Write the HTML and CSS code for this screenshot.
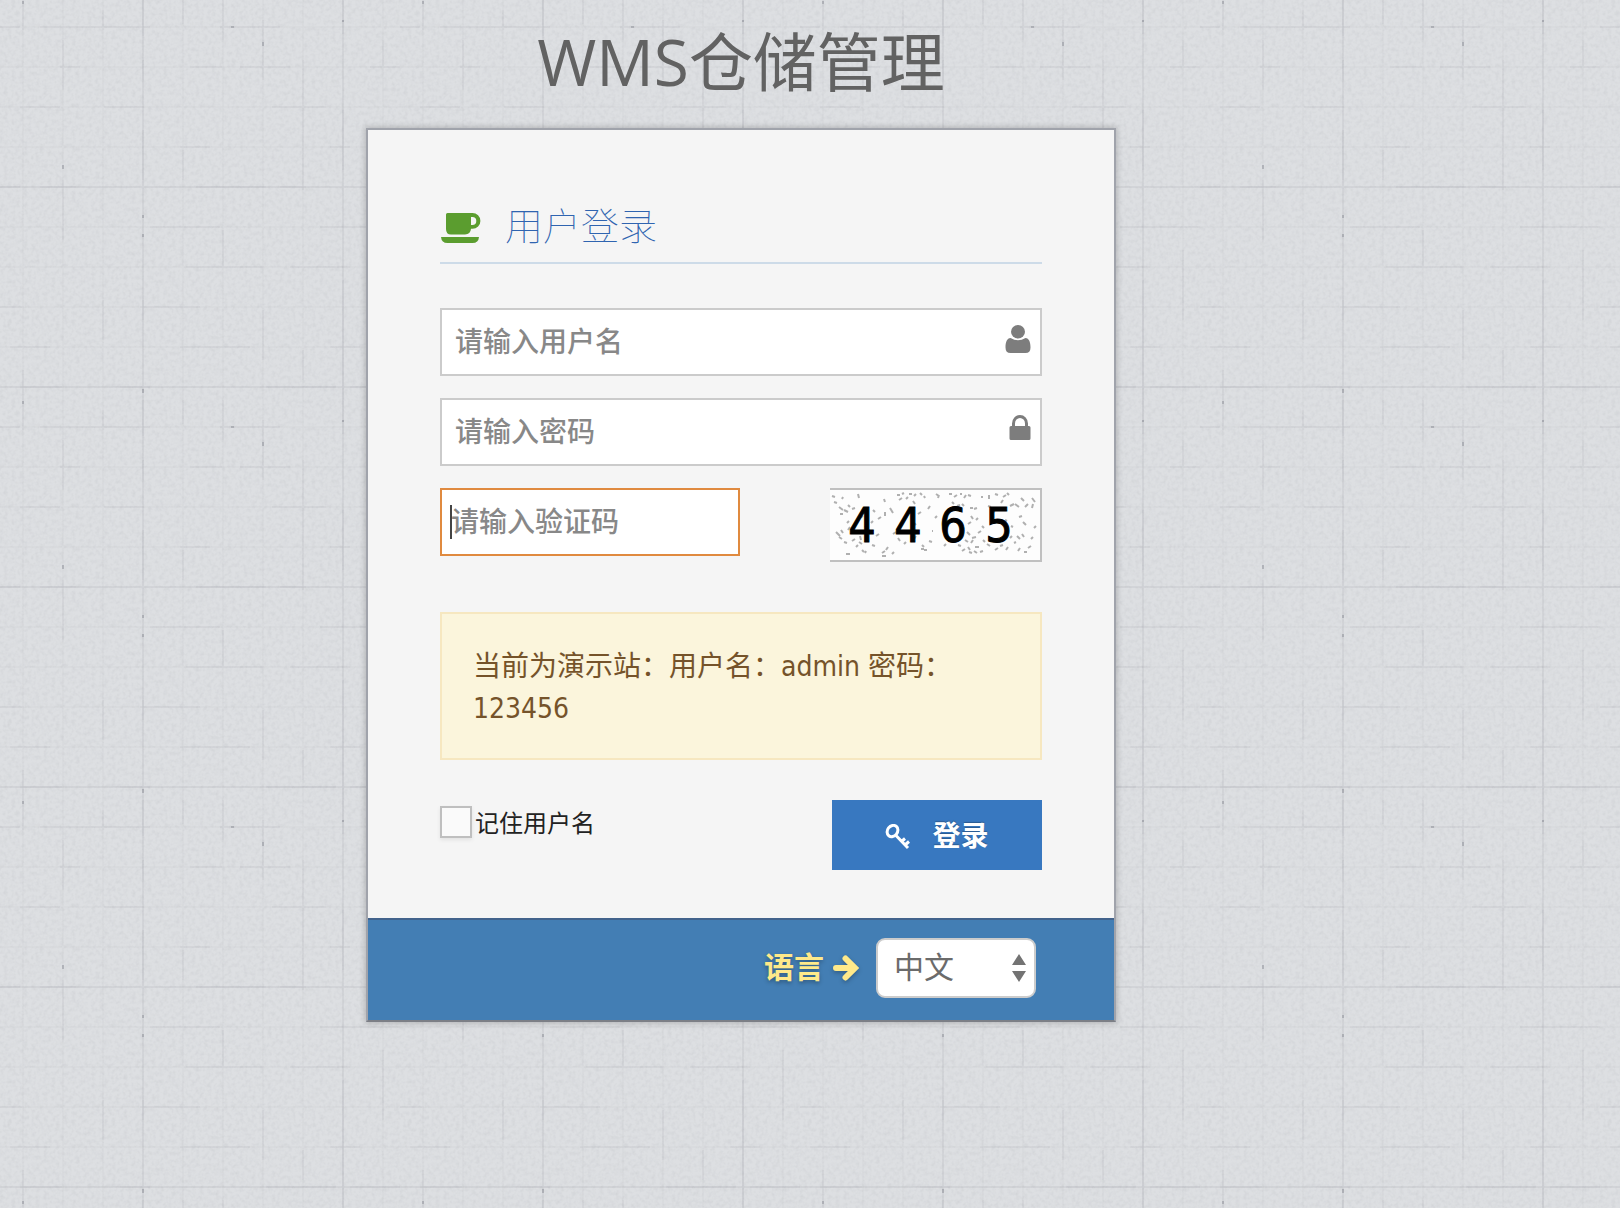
FILE: index.html
```html
<!DOCTYPE html>
<html lang="zh-CN">
<head>
  <meta charset="utf-8">
  <meta name="viewport" content="width=device-width, initial-scale=1">
  <title>WMS仓储管理</title>
  <link rel="stylesheet" href="styles.css">
</head>
<body>
  <main class="page">
    <h1 class="page-title">WMS仓储管理</h1>

    <form class="card">
      <div class="card-body">
        <h2 class="card-heading">
          <svg class="icon-cup" viewBox="0 0 40 30" aria-hidden="true">
            <path fill-rule="evenodd" d="M5 1.500Q5 0 6.500 0H31.500a7.500 7.500 0 0 1 0 15.800H30Q29.500 21.500 24 21.500H10Q5 21.500 5 16ZM30 4V12H31.300a4 4 0 0 0 0-8Z"/>
            <path d="M0 24H38Q37.500 30 31.500 30H6.500Q.500 30 0 24Z"/>
          </svg>
          <span>用户登录</span>
        </h2>

        <div class="fields">
          <div class="field">
            <input class="input" type="text" placeholder="请输入用户名" aria-label="用户名">
            <svg class="field-icon" viewBox="0 0 26 28" aria-hidden="true">
              <ellipse cx="13" cy="6.800" rx="7" ry="6.800"/>
              <path d="M5.500 13C2 13.300 .500 17 .500 22.500Q.500 28 5.500 28H20.500Q25.500 28 25.500 22.500C25.500 17 24 13.300 20.500 13Q13 17.500 5.500 13Z"/>
            </svg>
          </div>
          <div class="field">
            <input class="input" type="password" placeholder="请输入密码" aria-label="密码">
            <svg class="field-icon field-icon-lock" viewBox="0 0 22 26" aria-hidden="true">
              <path fill-rule="evenodd" d="M3 11V8.500a8 8.500 0 0 1 16 0V11H20Q21.500 11 21.500 12.500V23.500Q21.500 25 20 25H2Q.500 25 .500 23.500V12.500Q.500 11 2 11ZM6 11H16V8.500a5 5.500 0 0 0-10 0Z"/>
            </svg>
          </div>
          <div class="captcha-row">
            <div class="field field-code">
              <input class="input input-code" type="text" placeholder="请输入验证码" aria-label="验证码">
              <span class="caret" aria-hidden="true"></span>
            </div>
            <svg class="captcha" viewBox="0 0 210 70" role="img" aria-label="4465">
              <path class="speck" d="M2 6l3 1M4 12l3 1M9 17l4 3M14 20l4 2M22 19l3-1M12 9l1-2M28 4l1 4M10 24l3 0M18 15l2 2M30 28l3-2M17 33l2-2M6 42l4 4M9 47l3 2M13 43l-2-3M18 40l2-3M22 51l3-2M14 52l3 1M26 57l2-2M16 64l4 0M32 60l2 2M30 46l1 4M35 36l3 3M41 33l2-2M42 55l3 1M46 46l3-2M52 63l3-2M56 60l2-3M52 66l4 0M62 64l2-2M54 9l1 3M60 18l3 5M55 26l0-4M67 5l3 0M72 4l2-1M69 10l3-2M79 4l3 0M76 9l2-2M84 6l2-2M90 3l2 2M94 6l1 2M85 14l-2-3M88 24l3-2M63 44l3-2M68 48l2 3M74 54l2-2M84 49l2-3M91 59l3 0M94 60l3 0M92 55l2 2M102 41l1 0M106 4l3 2M108 8l1-3M119 4l3 0M124 7l3-2M130 4l2 0M134 8l2-3M138 5l3 1M122 12l2 2M127 16l3-1M132 14l2 2M140 18l3 0M144 19l3-1M141 26l2 3M138 34l3-2M146 30l2-2M151 7l2 0M159 5l0 4M165 4l3 1M173 7l3-2M177 3l2 2M171 13l2-3M180 16l4-2M185 14l4 3M191 8l3 3M195 17l3-3M202 8l3 4M202 18l1-4M189 27l3-1M193 32l3 3M181 36l2 1M175 30l2 1M204 38l2-2M187 46l3 3M192 44l2 3M180 48l2-2M184 53l2-1M188 61l2-3M194 62l3 0M198 58l3-2M201 49l2-2M132 61l3-2M138 57l2 3M141 53l2-3M145 57l4 0M142 48l4-1M148 43l3-2M137 42l3 3M135 50l3 2M153 50l2 2M157 54l3 2M150 62l3-1M128 55l3 1M121 50l3 2M114 56l2-2M116 22l3 0M105 28l2-2M98 19l2-3M84 33l2 2M48 29l3-2M43 20l2 2M165 60l3-2M170 56l3-1M176 60l2-3M158 16l3 1M163 22l2-1M152 36l2 2M139 62l3 1M144 61l3 2M35 63l1-2M29 52l3 2M99 51l3 1"/>
              <g class="captcha-digits">
                <text x="32" y="52">4</text>
                <text x="78" y="52">4</text>
                <text x="123" y="52">6</text>
                <text x="169" y="52">5</text>
              </g>
            </svg>
          </div>
        </div>

        <p class="notice">当前为演示站：用户名：admin 密码： 123456</p>

        <div class="actions">
          <label class="remember">
            <input class="remember-box" type="checkbox">
            <span>记住用户名</span>
          </label>
          <button class="submit" type="button">
            <svg class="icon-key" viewBox="0 0 26 26" aria-hidden="true">
              <ellipse cx="7.500" cy="7" rx="5" ry="6" transform="rotate(38 7.500 7)"/>
              <path d="M11 11.500L23 24M16.500 17.500L20 14.500M20 21L24 17.500"/>
            </svg>
            <span>登录</span>
          </button>
        </div>
      </div>

      <div class="card-footer">
        <label class="language" for="language">
          <span>语言</span>
          <svg class="icon-arrow" viewBox="0 0 26 26" aria-hidden="true">
            <path d="M3 13H20M12.500 3.500L22 13L12.500 22.500"/>
          </svg>
        </label>
        <div class="select-wrap">
          <select class="select" id="language">
            <option>中文</option>
            <option>English</option>
          </select>
          <svg class="select-arrows" viewBox="0 0 14 28" aria-hidden="true">
            <path d="M7 0L14 11H0ZM0 17H14L7 28Z"/>
          </svg>
        </div>
      </div>
    </form>
  </main>
</body>
</html>
```
FILE: styles.css
```css
* {
  box-sizing: border-box;
}

body {
  margin: 0;
  min-height: 100vh;
  color: #393939;
  font-family: "DejaVu Sans Condensed", "Noto Sans CJK SC", sans-serif;
  font-size: 28px;
  line-height: 42px;
  background-color: #dddfe2;
  /* graph-paper tile: fine grain, 40px grid, a darker rule every 200px */
  background-image: url("data:image/svg+xml,%3Csvg xmlns='http://www.w3.org/2000/svg' width='400' height='400'%3E%3Cfilter id='n' x='0' y='0' width='100%25' height='100%25'%3E%3CfeTurbulence type='fractalNoise' baseFrequency='.25' numOctaves='3' seed='4' stitchTiles='stitch'/%3E%3CfeColorMatrix values='0 0 0 0 .45 0 0 0 0 .46 0 0 0 0 .49 .9 0 0 0 -.35'/%3E%3C/filter%3E%3Crect width='400' height='400' filter='url(%23n)' opacity='.5'/%3E%3Cg fill='none' stroke='%23777b84' stroke-width='2'%3E%3Cpath opacity='.04' d='M23 0V400M63 0V400M103 0V400M183 0V400M223 0V400M263 0V400M303 0V400M383 0V400M0 27H400M0 67H400M0 107H400M0 147H400M0 227H400M0 267H400M0 307H400M0 347H400'/%3E%3Cpath opacity='.1' d='M143 0V400M343 0V400M0 187H400M0 387H400'/%3E%3Cg opacity='.07'%3E%3Cpath d='M23 0v30M23 370v30M63 40v50M63 180v60M103 10v20M103 300v40M183 0v24M183 150v30M223 0v40M223 230v36M263 20v60M263 310v50M303 60v130M303 350v30M383 40v26M383 250v70'/%3E%3Cpath d='M0 27h20M40 27h110M220 27h60M60 67h20M190 67h34M240 67h50M370 67h30M20 107h40M104 107h40M272 107h54M180 147h30M330 147h20M150 227h70M320 227h80M186 267h78M290 267h60M0 307h24M140 307h60M10 347h40M180 347h70M330 347h30'/%3E%3Cpath d='M143 0v36M143 60v20M143 130v50M143 300v20M343 0v34M343 110v60M343 280v120M0 187h20M40 187h36M196 187h70M280 187h26M20 387h42M120 387h30M266 387h70M350 387h50'/%3E%3C/g%3E%3Cpath opacity='.4' d='M63 165v4M143 215v3M143 234v3M23 1v3M263 42v4M143 389v4M231 27h3M343 20v2'/%3E%3C/g%3E%3C/svg%3E");
}

.page {
  display: flex;
  flex-direction: column;
  align-items: center;
  padding: 14px 138px 16px 0;
}

.page-title {
  margin: 0 0 18px;
  color: #626262;
  font-family: "Open Sans", "Noto Sans CJK SC", sans-serif;
  font-size: 64px;
  font-weight: 400;
  line-height: 96px;
}

.card {
  width: 100%;
  max-width: 750px;
  border: 2px solid #a0a3ab;
  border-bottom-color: #7c7f86;
  background: #f5f5f5;
  box-shadow: 0 0 6px 1px rgba(0, 0, 0, 0.2);
}

.card-body {
  padding: 73px 72px 48px;
}

.card-heading {
  display: flex;
  align-items: center;
  gap: 24px;
  margin: 0 0 44px;
  padding: 0 0 11px 1px;
  border-bottom: 2px solid #cddbe8;
  color: #2f64b0;
  font-size: 38px;
  font-weight: 100;
  line-height: 48px;
}

.icon-cup {
  width: 40px;
  height: 30px;
  margin-top: 2px;
  fill: #5b9d2f;
}

.fields {
  display: grid;
  gap: 22px;
}

.field {
  position: relative;
}

.input {
  display: block;
  width: 100%;
  height: 68px;
  padding: 0 48px 0 13px;
  border: 2px solid #cbcbcb;
  border-radius: 0;
  outline: none;
  background: #fff;
  color: #858585;
  font: inherit;
  font-weight: 500;
}

.input::placeholder {
  color: #888;
  opacity: 1;
}

.field-icon {
  position: absolute;
  top: 17px;
  right: 11px;
  width: 26px;
  height: 28px;
  fill: #7d7d7d;
}

.field-icon-lock {
  width: 22px;
  height: 26px;
}

.captcha-row {
  display: flex;
  align-items: flex-start;
  justify-content: space-between;
}

.field-code {
  flex: 0 1 300px;
}

.input-code {
  padding: 0 9px;
  border-color: #e08a3f;
}

.caret {
  position: absolute;
  top: 17px;
  left: 10px;
  width: 2px;
  height: 34px;
  background: #444;
}

.captcha {
  width: 212px;
  height: 74px;
  border: 2px solid #c0c0c0;
  border-left: 0;
  background: #fdfdfd;
}

.speck {
  fill: none;
  stroke: #b0b0b0;
  stroke-width: 2;
}

.captcha-digits {
  fill: #000;
  stroke: #000;
  stroke-width: 1;
  font-family: "DejaVu Sans Condensed", sans-serif;
  font-size: 48px;
  text-anchor: middle;
}

.notice {
  margin: 50px 0 40px;
  padding: 32px 32px 28px 31px;
  border: 2px solid #f6e7c0;
  background: #fbf5dc;
  color: #75532a;
}

.actions {
  display: flex;
  align-items: flex-start;
  justify-content: space-between;
}

.remember {
  display: flex;
  align-items: flex-start;
  gap: 3px;
  padding-top: 6px;
  color: #222;
  font-size: 24px;
  line-height: 36px;
}

.remember-box {
  width: 32px;
  height: 32px;
  margin: 0;
  border: 2px solid #bfbfbf;
  background: #fafafa;
  box-shadow: 0 2px 4px rgba(0, 0, 0, 0.08);
  appearance: none;
}

.submit {
  display: flex;
  align-items: center;
  justify-content: center;
  gap: 21px;
  width: 210px;
  height: 70px;
  padding: 4px 0 0;
  border: 0;
  background: #3878c0;
  color: #fff;
  font: inherit;
  font-weight: 700;
  text-shadow: 0 -1px 1px rgba(0, 0, 0, 0.25);
}

.icon-key {
  width: 26px;
  height: 26px;
  fill: none;
  stroke: #fff;
  stroke-width: 3;
}

.card-footer {
  display: flex;
  align-items: center;
  justify-content: flex-end;
  gap: 17px;
  padding: 18px 78px 22px 16px;
  border-top: 2px solid #42638c;
  background: #437eb4;
  font-size: 30px;
}

.language {
  display: flex;
  align-items: center;
  gap: 9px;
  color: #fee98a;
  font-weight: 700;
  text-shadow: 0 2px 4px rgba(0, 0, 0, 0.3);
}

.icon-arrow {
  width: 26px;
  height: 26px;
  fill: none;
  stroke: #fee98a;
  stroke-width: 6;
  stroke-linecap: round;
  filter: drop-shadow(0 2px 2px rgba(0, 0, 0, 0.25));
}

.select-wrap {
  position: relative;
}

.select {
  display: block;
  width: 160px;
  height: 60px;
  padding: 0 40px 0 16px;
  border: 2px solid #ccc;
  border-radius: 9px;
  background: #fff;
  color: #6b6b6b;
  font: inherit;
  appearance: none;
}

.select-arrows {
  position: absolute;
  top: 16px;
  right: 10px;
  width: 14px;
  height: 28px;
  fill: #737373;
  pointer-events: none;
}
```
